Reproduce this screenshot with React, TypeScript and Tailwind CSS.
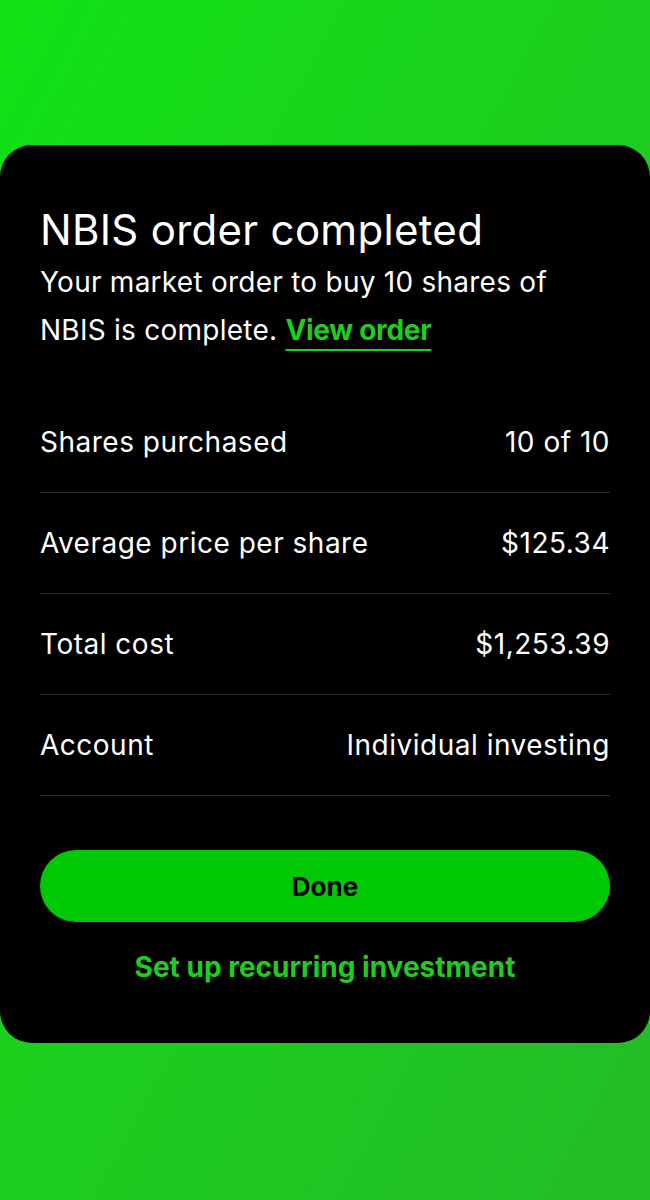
const rows = [
  { label: "Shares purchased", value: "10 of 10" },
  { label: "Average price per share", value: "$125.34" },
  { label: "Total cost", value: "$1,253.39" },
  { label: "Account", value: "Individual investing" },
];

export default function App() {
  return (
    <div
      className="min-h-[1200px] w-full bg-gradient-to-br from-[#0fe214] via-[#1cce1e] to-[#22bd26] pt-[145px]"
      style={{ fontFamily: "Inter, 'Liberation Sans', sans-serif" }}
    >
      <div className="rounded-[32px] bg-black px-10 pt-[61px] pb-[58px] text-white">
        {/* Heading */}
        <h1 className="text-[42px] leading-[48px] font-normal tracking-[0.3px]">NBIS order completed</h1>
        <p className="mt-[4px] text-[28px] leading-[48px] tracking-[0.25px]">
          Your market order to buy 10 shares of NBIS is complete.{" "}
          <span className="font-bold text-[#1ccf1c] underline decoration-[#1ccf1c] decoration-2 underline-offset-[9px] tracking-[-0.3px]">
            View order
          </span>
        </p>

        {/* Order details */}
        <div className="mt-[38px]">
          {rows.map((r) => (
            <div
              key={r.label}
              className="flex h-[101px] items-center justify-between border-b border-[#2a2a2a] text-[28px] tracking-[0.5px]"
            >
              <span>{r.label}</span>
              <span>{r.value}</span>
            </div>
          ))}
        </div>

        <button className="mt-[54px] flex h-[72px] w-full items-center justify-center rounded-full bg-[#00c805] text-[26px] font-bold text-black">
          Done
        </button>
        <div className="mt-[27px] text-center text-[28px] leading-[36px] font-bold text-[#1ccf1c]">
          Set up recurring investment
        </div>
      </div>
    </div>
  );
}
